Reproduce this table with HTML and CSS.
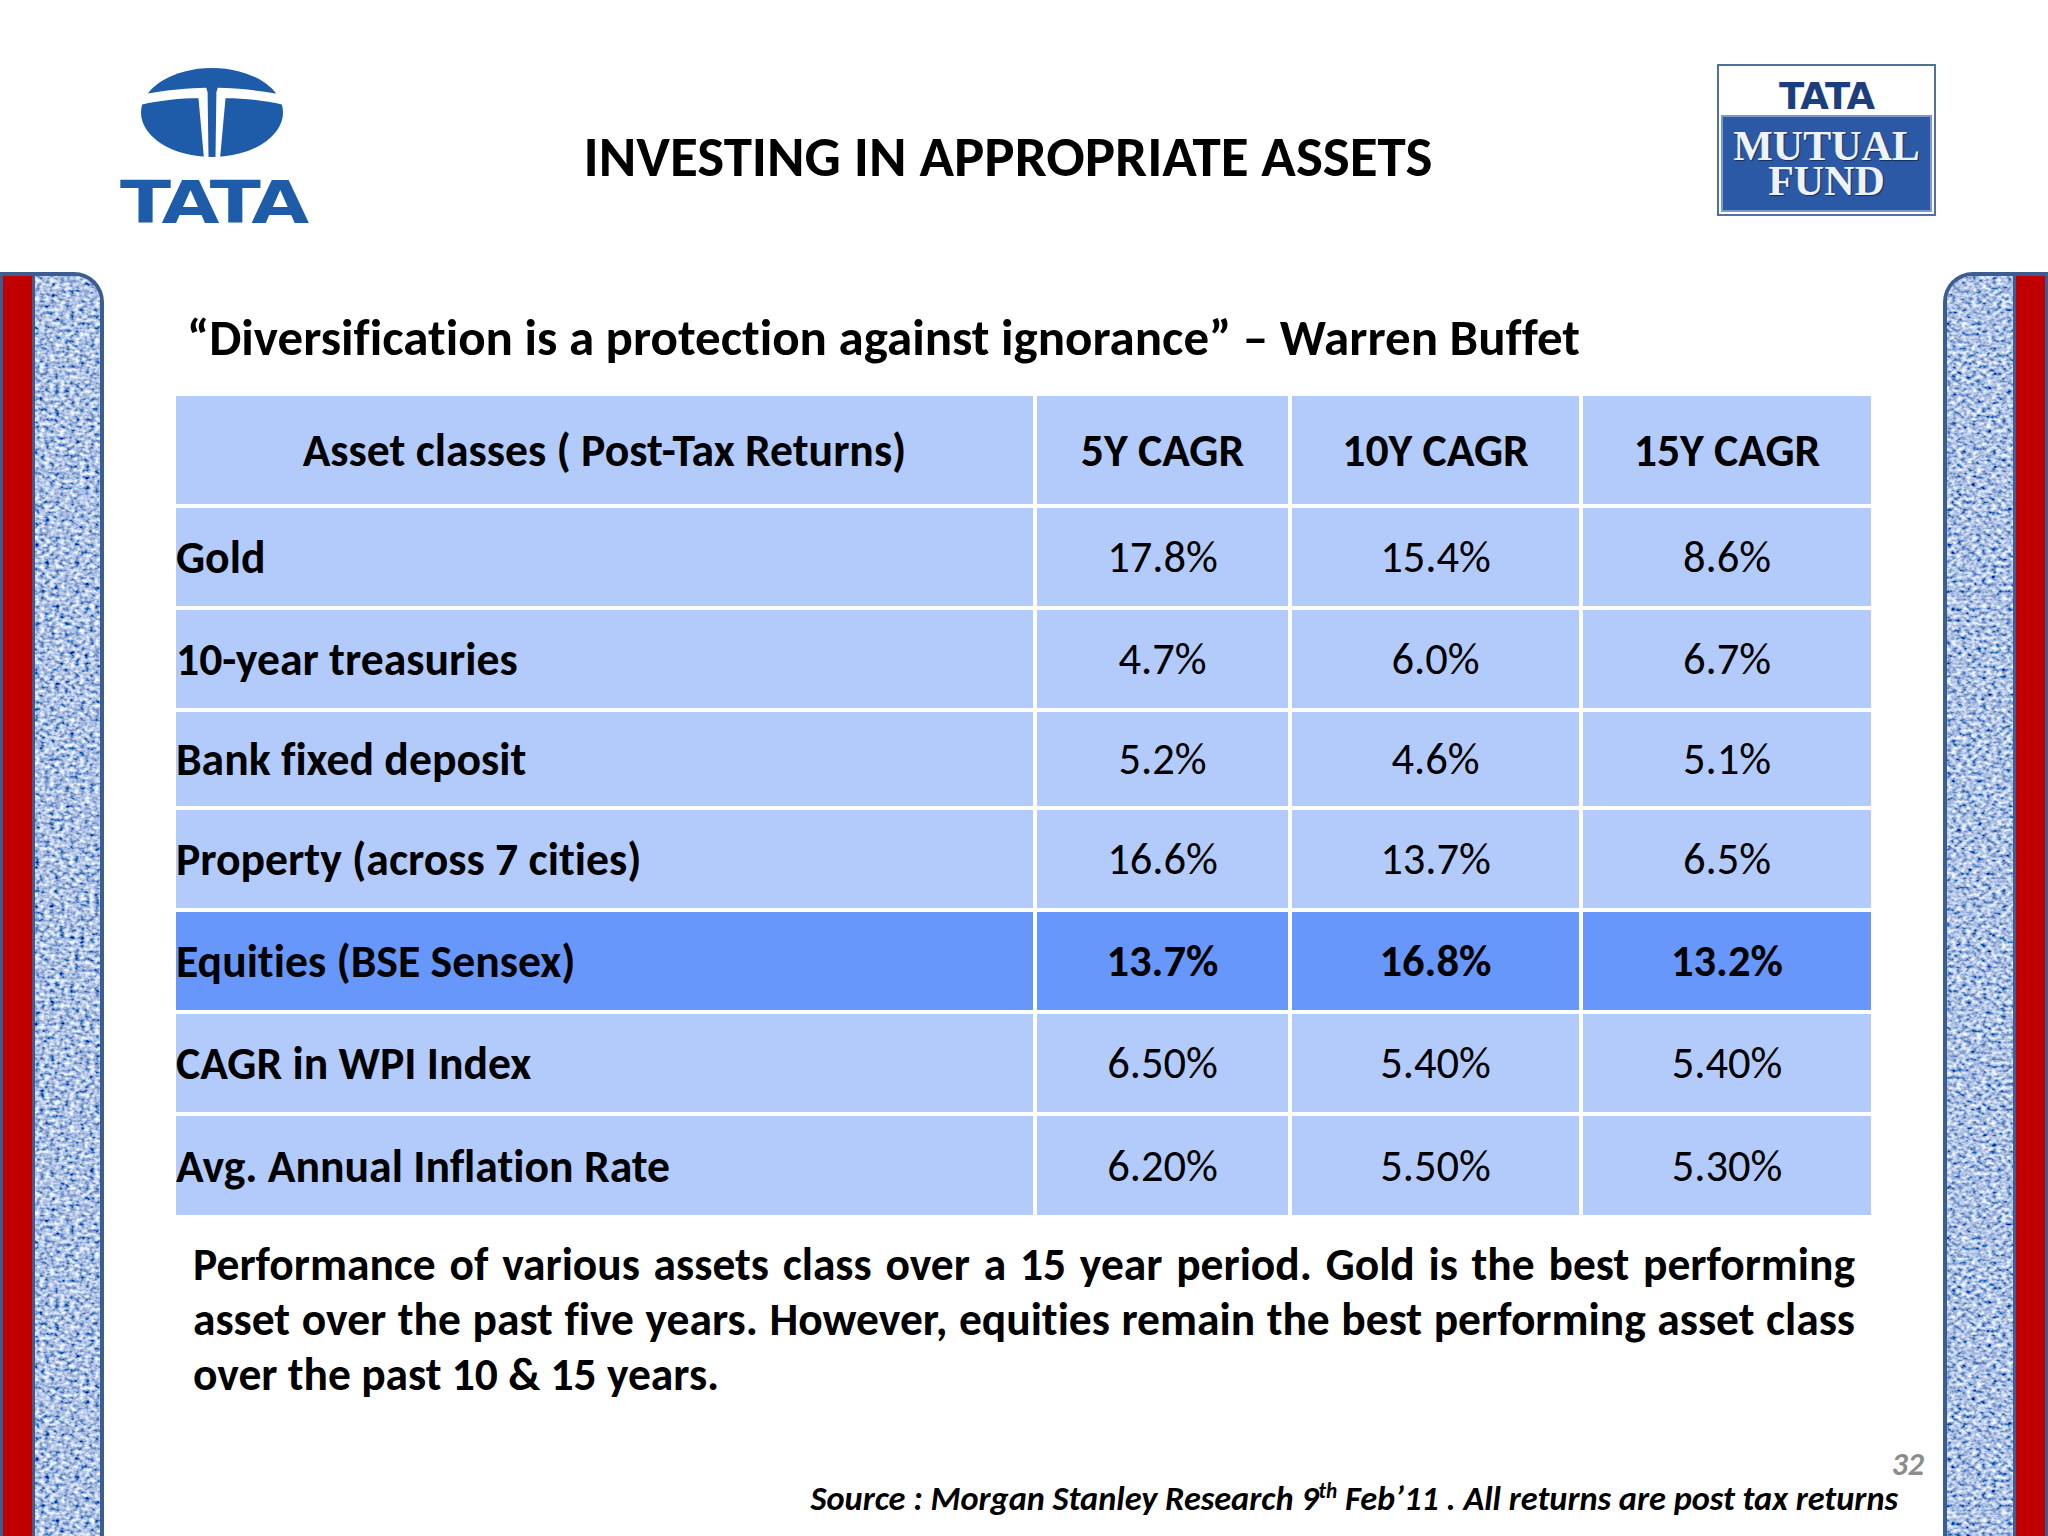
FILE: index.html
```html
<!DOCTYPE html>
<html lang="en">
<head>
<meta charset="utf-8">
<title>Investing in appropriate assets</title>
<link rel="stylesheet" href="styles.css">
</head>
<body>
<div class="slide">
  <header class="header">
    <div class="tata-logo">
      <svg class="emblem" viewBox="130 76 420 242" preserveAspectRatio="none" xmlns="http://www.w3.org/2000/svg">
        <ellipse cx="340" cy="197" rx="210" ry="121" fill="#1e5ba8"/>
        <path d="M110 152 C200 136 270 131 323 130 L327 142 L330 340 L318 340 L300 158 C240 158 180 164 110 180 Z" fill="#fff"/>
        <path d="M570 152 C480 136 410 131 357 130 L353 142 L350 340 L362 340 L380 158 C440 158 500 164 570 180 Z" fill="#fff"/>
      </svg>
      <div class="wordmark">TATA</div>
    </div>
    <h1 class="title">INVESTING IN APPROPRIATE ASSETS</h1>
    <div class="mf-logo">
      <div class="mf-top"><span>TATA</span></div>
      <div class="mf-bottom"><span class="mf-name">MUTUAL FUND</span></div>
    </div>
  </header>
  <main class="main">
    <div class="bar bar-left">
      <div class="red"></div>
      <div class="texture">
        <svg xmlns="http://www.w3.org/2000/svg" preserveAspectRatio="none">
          <filter id="denimL" x="0" y="0" width="100%" height="100%">
            <feTurbulence type="fractalNoise" baseFrequency="0.2 0.28" numOctaves="2" seed="3"/>
            <feColorMatrix type="matrix" values="1.7 0 0 0 -0.43  1.6 0 0 0 -0.27  1.15 0 0 0 0.19  0 0 0 0 1"/>
          </filter>
          <rect width="100%" height="100%" filter="url(#denimL)"/>
        </svg>
      </div>
    </div>
    <section class="content">
      <p class="quote">“Diversification is a protection against ignorance” – Warren Buffet</p>
      <table class="returns">
        <colgroup>
          <col class="c1"><col class="c2"><col class="c3"><col class="c4">
        </colgroup>
        <thead>
          <tr class="head">
            <th>Asset classes ( Post-Tax Returns)</th>
            <th>5Y CAGR</th>
            <th>10Y CAGR</th>
            <th>15Y CAGR</th>
          </tr>
        </thead>
        <tbody>
          <tr class="r98"><td class="label">Gold</td><td>17.8%</td><td>15.4%</td><td>8.6%</td></tr>
          <tr class="r98"><td class="label">10-year treasuries</td><td>4.7%</td><td>6.0%</td><td>6.7%</td></tr>
          <tr class="r94"><td class="label">Bank fixed deposit</td><td>5.2%</td><td>4.6%</td><td>5.1%</td></tr>
          <tr class="r98"><td class="label">Property (across 7 cities)</td><td>16.6%</td><td>13.7%</td><td>6.5%</td></tr>
          <tr class="r98 hl"><td class="label">Equities (BSE Sensex)</td><td>13.7%</td><td>16.8%</td><td>13.2%</td></tr>
          <tr class="r98"><td class="label">CAGR in WPI Index</td><td>6.50%</td><td>5.40%</td><td>5.40%</td></tr>
          <tr class="r99"><td class="label">Avg. Annual Inflation Rate</td><td>6.20%</td><td>5.50%</td><td>5.30%</td></tr>
        </tbody>
      </table>
      <p class="summary">Performance of various assets class over a 15 year period. Gold is the best performing asset over the past five years. However, equities remain the best performing asset class over the past 10 &amp; 15 years.</p>
      <div class="footer">
        <span class="page-num">32</span>
        <p class="source">Source : Morgan Stanley Research 9<sup>th</sup> Feb’11 . All returns are post tax returns</p>
      </div>
    </section>
    <div class="bar bar-right">
      <div class="texture">
        <svg xmlns="http://www.w3.org/2000/svg" preserveAspectRatio="none">
          <filter id="denimR" x="0" y="0" width="100%" height="100%">
            <feTurbulence type="fractalNoise" baseFrequency="0.2 0.28" numOctaves="2" seed="7"/>
            <feColorMatrix type="matrix" values="1.7 0 0 0 -0.43  1.6 0 0 0 -0.27  1.15 0 0 0 0.19  0 0 0 0 1"/>
          </filter>
          <rect width="100%" height="100%" filter="url(#denimR)"/>
        </svg>
      </div>
      <div class="red"></div>
    </div>
  </main>
</div>
</body>
</html>
```

FILE: styles.css
```css
* { box-sizing: border-box; margin: 0; padding: 0; }

html, body {
  width: 2048px;
  height: 1536px;
  overflow: hidden;
  background: #ffffff;
}

body {
  font-family: Carlito, Calibri, Lato, "Open Sans", sans-serif;
  font-variant-ligatures: none;
  color: #000;
}

.slide {
  width: 2048px;
  height: 1536px;
  display: flex;
  flex-direction: column;
}

/* ---------- header ---------- */
.header {
  flex: none;
  height: 272px;
  display: flex;
  align-items: flex-start;
  padding: 0 112px 0 120px;
}

.tata-logo {
  width: 187px;
  margin-top: 68px;
  display: flex;
  flex-direction: column;
}

.emblem {
  display: block;
  width: 142px;
  height: 89px;
  margin-left: 21px;
}

.wordmark {
  font-family: "DejaVu Sans", sans-serif;
  font-weight: bold;
  font-size: 59px;
  line-height: 50px;
  color: #1e5ba8;
  white-space: nowrap;
  letter-spacing: -3px;
  transform: scaleX(1.27);
  transform-origin: left center;
  margin-top: 21px;
}

.title {
  flex: 1;
  text-align: center;
  font-size: 57px;
  font-weight: bold;
  line-height: 68px;
  margin-top: 123px;
  padding-right: 8px;
  white-space: nowrap;
}

.mf-logo {
  flex: none;
  width: 219px;
  height: 152px;
  margin-top: 64px;
  border: 2px solid #52709f;
  background: #fff;
  padding: 2px;
  display: flex;
  flex-direction: column;
}

.mf-top {
  height: 47px;
  display: flex;
  justify-content: center;
  align-items: center;
  font-family: "DejaVu Sans", sans-serif;
  font-weight: bold;
  font-size: 37px;
  letter-spacing: -1px;
  color: #1d3e7e;
  padding-top: 9px;
}

.mf-bottom {
  flex: 1;
  background: #2c59a6;
  border: 2px solid #7d98cc;
  display: flex;
  align-items: center;
  justify-content: center;
}

.mf-name {
  display: block;
  width: 190px;
  text-align: center;
  font-family: "Liberation Serif", "Times New Roman", serif;
  font-weight: bold;
  font-size: 42px;
  line-height: 35px;
  color: #eef2fa;
  text-shadow: 1px 1px 1px rgba(0, 0, 0, 0.5);
}

/* ---------- main ---------- */
.main {
  flex: 1;
  display: flex;
  min-height: 0;
}

.bar {
  flex: none;
  display: flex;
  border: 4px solid #3d5d8e;
  border-bottom: 0;
  overflow: hidden;
}

.bar-left {
  width: 104px;
  border-left-width: 3px;
  border-top-right-radius: 30px;
}

.bar-right {
  width: 105px;
  border-right-width: 3px;
  border-top-left-radius: 30px;
}

.red {
  flex: none;
  width: 29px;
  background: #c00000;
}

.texture {
  flex: 1;
  background: #6b87c4;
}

.bar-left .texture { border-left: 3px solid #3d5d8e; }
.bar-right .texture { border-right: 3px solid #3d5d8e; }

.texture svg {
  display: block;
  width: 100%;
  height: 100%;
}

.content {
  flex: 1;
  min-width: 0;
  display: flex;
  flex-direction: column;
}

.quote {
  margin: 35px 0 0 83px;
  font-size: 51px;
  font-weight: bold;
  line-height: 62px;
  white-space: nowrap;
}

/* ---------- table ---------- */
.returns {
  margin: 23px 0 0 68px;
  width: 1703px;
  border-collapse: separate;
  border-spacing: 4px;
  table-layout: fixed;
}

.returns col.c1 { width: 857px; }
.returns col.c2 { width: 251px; }
.returns col.c3 { width: 287px; }
.returns col.c4 { width: 288px; }

.returns th,
.returns td {
  background: #b3cbfa;
  padding: 0;
  font-size: 44.5px;
  line-height: 54px;
  text-align: center;
  vertical-align: middle;
  white-space: nowrap;
}

.returns th { font-weight: bold; height: 108px; font-size: 45.7px; }
.returns td.label { text-align: left; font-weight: bold; font-size: 45.7px; }

.returns tr.r98 td { height: 98px; }
.returns tr.r94 td { height: 94px; }
.returns tr.r99 td { height: 99px; }

.returns tr.hl td {
  background: #6797fb;
  font-weight: bold;
}

/* ---------- text below ---------- */
.summary {
  margin: 18px 0 0 89px;
  width: 1662px;
  font-size: 45.5px;
  font-weight: bold;
  line-height: 55px;
  text-align: justify;
}

.footer {
  margin-top: auto;
  display: flex;
  flex-direction: column;
  align-items: flex-end;
  padding-bottom: 19px;
}

.page-num {
  margin-right: 19px;
  font-size: 32px;
  line-height: 30px;
  font-weight: bold;
  font-style: italic;
  color: #8c8c8c;
}

.source {
  margin-right: 45px;
  font-size: 34.3px;
  line-height: 37px;
  font-weight: bold;
  font-style: italic;
  white-space: nowrap;
}

.source sup {
  font-size: 0.62em;
  line-height: 0;
  vertical-align: 0.55em;
}
```
